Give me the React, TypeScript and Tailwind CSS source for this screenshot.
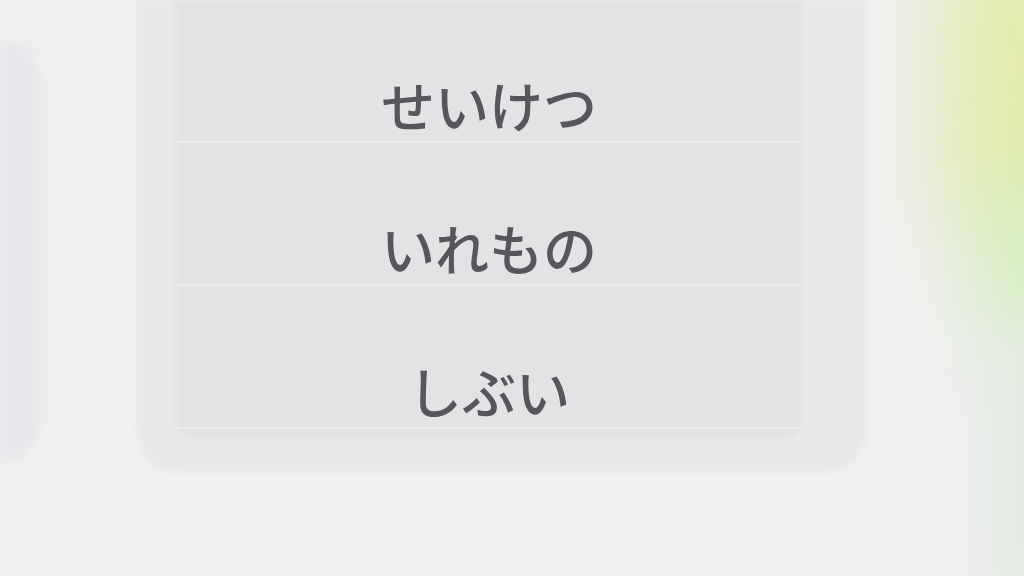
import React from 'react';

const items = ['せいけつ', 'いれもの', 'しぶい'];

export default function App() {
    return (
        <div className="relative w-[1024px] h-[576px] overflow-hidden bg-[#f0f0f0] font-['Noto_Sans_CJK_JP','Noto_Sans_CJK_SC',sans-serif]">
            {/* soft glow on the right */}
            <div className="absolute right-[-90px] top-[-80px] w-[170px] h-[330px] rounded-full bg-[#e0ea98] blur-[45px] opacity-80" />
            <div className="absolute right-[-80px] top-[160px] w-[130px] h-[200px] rounded-full bg-[#d2efbd] blur-[40px] opacity-80" />
            <div className="absolute right-[-50px] top-[340px] w-[80px] h-[260px] rounded-full bg-[#e2ebe0] blur-[30px]" />

            <div className="relative flex items-start">
                {/* side panel, cut at the left edge */}
                <div className="mt-[40px] w-[40px] h-[422px] rounded-r-[34px] bg-[#e9e9ed] blur-[5px]" />

                {/* main panel */}
                <div className="relative ml-[96px] w-[732px] pl-[40px] pr-[66px] pb-[34px]">
                    <div className="absolute inset-0 rounded-b-[44px] bg-[#e9e9eb] blur-[3px]" />
                    <div className="relative flex flex-col">
                        <div className="absolute inset-0 rounded-b-[20px] bg-[#e3e3e6] blur-[2px]" />
                        {items.map((label, i) => (
                            <div
                                key={label}
                                className={`relative flex h-[143px] items-end justify-center pb-[9px] border-b-2 border-[#ebebee] ${i === 2 ? 'h-[140px]' : ''}`}
                            >
                                <span className="text-[54px] font-medium leading-none text-[#56565b]">{label}</span>
                            </div>
                        ))}
                        <div className="h-[10px]" />
                    </div>
                </div>
            </div>
        </div>
    );
}
